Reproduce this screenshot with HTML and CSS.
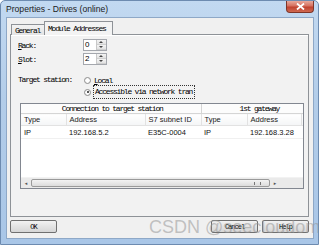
FILE: index.html
```html
<!DOCTYPE html>
<html lang="en">

<head>
    <meta charset="UTF-8">
    <title>Properties - Drives (online)</title>
    <link rel="stylesheet" href="styles.css">
</head>

<body>
    <div class="window">
        <div class="titlebar">
            <span class="title">Properties - Drives (online)</span>
            <span class="close">
                <svg width="9" height="7" viewBox="0 0 9 7"><path d="M1 0.5 L8 6.5 M8 0.5 L1 6.5" stroke="#fff" stroke-width="1.8"/></svg>
            </span>
        </div>

        <div class="client">
            <div class="tabs">
                <div class="tab">General</div>
                <div class="tab active">Module Addresses</div>
            </div>

            <div class="panel">
                <div class="field">
                    <label><u>R</u>ack:</label>
                    <div class="spin">
                        <span class="spin-value">0</span>
                        <span class="spin-arrows"><i class="up"></i><i class="down"></i></span>
                    </div>
                </div>
                <div class="field">
                    <label><u>S</u>lot:</label>
                    <div class="spin">
                        <span class="spin-value">2</span>
                        <span class="spin-arrows"><i class="up"></i><i class="down"></i></span>
                    </div>
                </div>

                <div class="target">
                    <span class="target-label">Target station:</span>
                    <div class="radios">
                        <div class="radio"><span class="dot"></span><span class="mono"><u>L</u>ocal</span></div>
                        <div class="radio checked"><span class="dot"></span><span class="mono focus">Accessible via network tran</span></div>
                    </div>
                </div>

                <!-- Lista de conexões -->
                <div class="list">
                    <div class="list-view">
                        <table>
                            <colgroup>
                                <col style="width: 45px">
                                <col style="width: 79px">
                                <col style="width: 56px">
                                <col style="width: 46px">
                                <col style="width: 54px">
                                <col style="width: 60px">
                            </colgroup>
                            <thead>
                                <tr class="group">
                                    <th colspan="3">Connection to target station</th>
                                    <th colspan="3" class="gw">1st gateway</th>
                                </tr>
                                <tr class="cols">
                                    <th>Type</th>
                                    <th>Address</th>
                                    <th>S7 subnet ID</th>
                                    <th>Type</th>
                                    <th>Address</th>
                                    <th></th>
                                </tr>
                            </thead>
                            <tbody>
                                <tr>
                                    <td>IP</td>
                                    <td>192.168.5.2</td>
                                    <td>E35C-0004</td>
                                    <td>IP</td>
                                    <td>192.168.3.28</td>
                                    <td></td>
                                </tr>
                            </tbody>
                        </table>
                    </div>
                    <div class="hscroll">
                        <span class="arrow">&#9666;</span>
                        <span class="thumb"><span class="grip"></span></span>
                        <span class="arrow">&#9656;</span>
                    </div>
                </div>
            </div>

            <div class="buttons">
                <button class="btn">OK</button>
                <span class="spacer"></span>
                <button class="btn">Cancel</button>
                <button class="btn">Help</button>
            </div>
        </div>

        <div class="watermark">CSDN @seecloudome</div>
    </div>
</body>

</html>
```

FILE: styles.css
```css
body {
    margin: 0;
    padding: 0;
    background-color: #ffffff;
}

.window {
    position: relative;
    width: 319px;
    height: 245px;
    box-sizing: border-box;
    padding: 0 4px 5px 5px;
    display: flex;
    flex-direction: column;
    overflow: hidden;
    background: linear-gradient(to bottom, #c2d9f1, #b3cde9 40%, #a9c6e7);
    border: 1px solid #6d8bb0;
    border-radius: 5px 5px 0 0;
}

.titlebar {
    height: 17px;
    display: flex;
    align-items: flex-start;
}

.title {
    margin-top: 3px;
    font-family: "Liberation Sans", Arial, sans-serif;
    font-size: 8.6px;
    color: #1b1b1b;
}

.close {
    margin-left: auto;
    width: 28px;
    height: 12px;
    box-sizing: border-box;
    display: flex;
    align-items: center;
    justify-content: center;
    background: linear-gradient(to bottom, #e8a99c, #d5705f 45%, #c0412f 55%, #cf6a52);
    border: 1px solid #7e3528;
    border-top: none;
    border-radius: 0 0 4px 4px;
}

.client {
    flex: 1;
    display: flex;
    flex-direction: column;
    background-color: #f0f0f0;
    border: 1px solid #8ea8c7;
    padding: 3px 4px 5px 3px;
    font-family: "Liberation Mono", "Courier New", monospace;
    font-size: 8px;
    letter-spacing: -1.2px;
    color: #000;
}

.tabs {
    display: flex;
    align-items: flex-end;
    height: 14px;
    margin-bottom: -1px;
    padding-left: 1px;
    position: relative;
    z-index: 1;
}

.tab {
    height: 11px;
    line-height: 11px;
    padding: 0 3px;
    width: 33px;
    box-sizing: border-box;
    border: 1px solid #8e9297;
    border-bottom: none;
    border-right: none;
    background: linear-gradient(to bottom, #f2f2f2, #e4e4e4);
}

.tab.active {
    width: 69px;
    height: 14px;
    line-height: 14px;
    padding: 0 3px;
    border-right: 1px solid #8e9297;
    background: #f3f3f3;
}

.panel {
    height: 183px;
    box-sizing: border-box;
    border: 1px solid #8e9297;
    box-shadow: inset 0 1px 0 #ffffff;
    background-color: #f2f2f2;
    padding: 4px 0 0 7px;
}

.field {
    display: flex;
    align-items: center;
    height: 12px;
    margin-bottom: 2px;
}

.field label {
    width: 65px;
}

.spin {
    display: flex;
    width: 24px;
    height: 12px;
    box-sizing: border-box;
    border: 1px solid #a4a7ad;
    background-color: #fff;
}

.spin-value {
    flex: 1;
    font-family: "Liberation Sans", Arial, sans-serif;
    letter-spacing: 0;
    font-size: 8px;
    line-height: 10px;
    padding-left: 1px;
}

.spin-arrows {
    width: 9px;
    display: flex;
    flex-direction: column;
    border-left: 1px solid #c8c8c8;
}

.spin-arrows i {
    flex: 1;
    position: relative;
    background: linear-gradient(to bottom, #f4f4f4, #e2e2e2);
    border-bottom: 1px solid #d0d0d0;
}

.spin-arrows i::after {
    content: "";
    position: absolute;
    left: 2px;
    top: 1px;
    border-left: 2px solid transparent;
    border-right: 2px solid transparent;
}

.spin-arrows .up::after {
    border-bottom: 2px solid #444;
}

.spin-arrows .down::after {
    border-top: 2px solid #444;
}

.target {
    display: flex;
    margin-top: 9px;
}

.target-label {
    width: 65px;
    height: 12px;
    line-height: 12px;
}

.radio {
    display: flex;
    align-items: center;
    height: 12px;
    gap: 3px;
}

.dot {
    width: 7px;
    height: 7px;
    box-sizing: border-box;
    border-radius: 50%;
    border: 1px solid #8f8f8f;
    background: radial-gradient(circle, #ffffff 40%, #e6e6e6);
    margin-left: 1px;
    position: relative;
}

.radio.checked .dot::after {
    content: "";
    position: absolute;
    left: 1.5px;
    top: 1.5px;
    width: 2px;
    height: 2px;
    border-radius: 50%;
    background-color: #222;
}

.focus {
    outline: 1px dotted #333;
    outline-offset: 0;
    padding: 1px 2px 1px 1px;
    line-height: 10px;
}

.list {
    margin: 5px 0 0 2px;
    width: 284px;
    height: 86px;
    box-sizing: border-box;
    border: 1px solid #828790;
    background-color: #fff;
    display: flex;
    flex-direction: column;
}

.list-view {
    flex: 1;
    overflow: hidden;
}

table {
    border-collapse: collapse;
    table-layout: fixed;
    width: 340px;
}

th,
td {
    padding: 0 0 0 3px;
    text-align: left;
    white-space: nowrap;
    overflow: hidden;
}

.group th {
    height: 9px;
    line-height: 9px;
    text-align: center;
    font-weight: normal;
    border-right: 1px solid #d5d5d5;
    border-bottom: 1px solid #d5d5d5;
    background-color: #fcfcfc;
}

.group th.gw {
    text-align: left;
    padding-left: 38px;
}

.cols th {
    height: 11px;
    font-family: "Liberation Sans", Arial, sans-serif;
    font-size: 7.5px;
    letter-spacing: 0;
    font-weight: normal;
    color: #222;
    border-right: 1px solid #e2e2e2;
    border-bottom: 1px solid #e2e2e2;
    background: linear-gradient(to bottom, #ffffff, #f4f5f6);
}

td {
    height: 12px;
    font-family: "Liberation Sans", Arial, sans-serif;
    font-size: 7.5px;
    letter-spacing: 0;
    color: #111;
    border-bottom: 1px solid #f0f0f0;
}

.hscroll {
    height: 10px;
    display: flex;
    align-items: center;
    background-color: #eaeaea;
    border-top: 1px solid #f2f2f2;
}

.arrow {
    width: 10px;
    text-align: center;
    font-family: "DejaVu Sans", sans-serif;
    font-size: 5px;
    letter-spacing: 0;
    color: #555;
}

.thumb {
    width: 239px;
    height: 8px;
    box-sizing: border-box;
    border: 1px solid #9a9a9a;
    border-radius: 2px;
    background: linear-gradient(to bottom, #f3f3f3, #dcdcdc);
    display: flex;
    justify-content: flex-end;
    align-items: center;
    padding-right: 8px;
}

.grip {
    width: 5px;
    height: 3px;
    border-left: 1px solid #777;
    border-right: 1px solid #777;
    position: relative;
}

.spacer {
    flex: 1;
}

.buttons {
    display: flex;
    margin-top: 3px;
    height: 13px;
    gap: 4px;
}

.btn {
    width: 47px;
    height: 13px;
    padding: 0;
    font-family: "Liberation Mono", "Courier New", monospace;
    font-size: 7px;
    letter-spacing: -1px;
    color: #000;
    border: 1px solid #707070;
    border-radius: 2px;
    background: linear-gradient(to bottom, #f2f2f2, #e3e3e3 50%, #d6d6d6);
}

.watermark {
    position: absolute;
    left: 148px;
    top: 216px;
    font-family: "Liberation Sans", Arial, sans-serif;
    font-size: 18px;
    color: rgba(150, 150, 150, 0.55);
    white-space: nowrap;
    pointer-events: none;
}
```
